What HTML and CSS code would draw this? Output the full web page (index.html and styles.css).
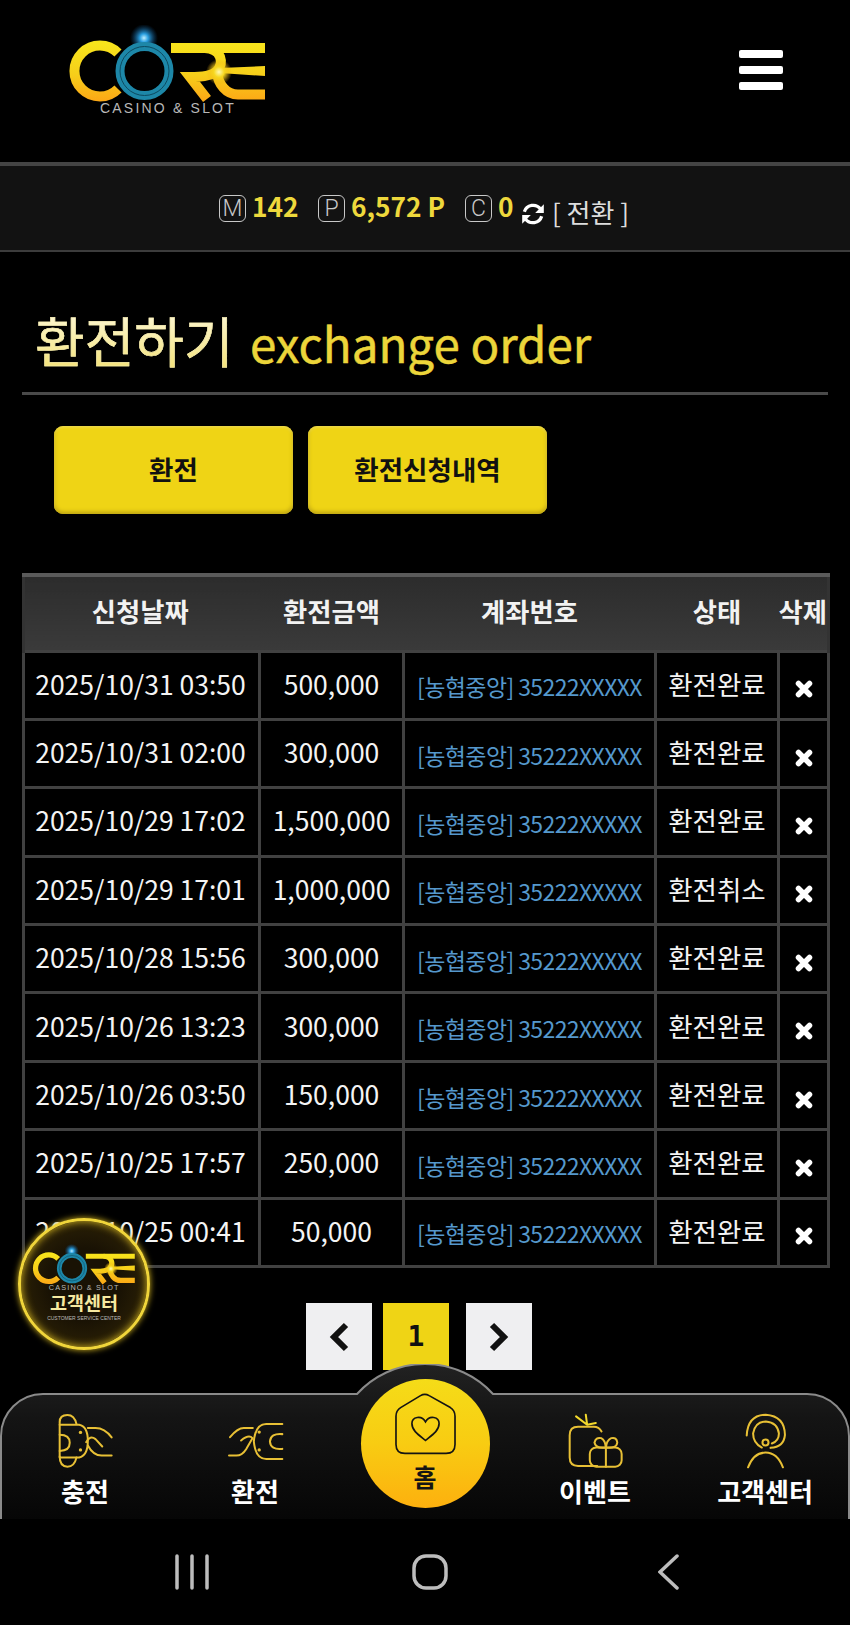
FILE: index.html
```html
<!DOCTYPE html>
<html lang="ko">
<head>
<meta charset="utf-8">
<title>환전하기</title>
<link rel="stylesheet" href="styles.css">
</head>
<body>
<svg class="defs" width="0" height="0" aria-hidden="true">
  <defs>
    <linearGradient id="gold" x1="0" y1="42" x2="0" y2="100" gradientUnits="userSpaceOnUse">
      <stop offset="0" stop-color="#f8e51c"/><stop offset=".55" stop-color="#f6cf1a"/><stop offset="1" stop-color="#fca916"/>
    </linearGradient>
    <radialGradient id="blueflare"><stop offset="0" stop-color="#bfeeff"/><stop offset=".3" stop-color="#2a9fe0"/><stop offset="1" stop-color="#0a4a80" stop-opacity="0"/></radialGradient>
    <radialGradient id="goldflare"><stop offset="0" stop-color="#fff8b0"/><stop offset=".4" stop-color="#f7d820"/><stop offset="1" stop-color="#f0b010" stop-opacity="0"/></radialGradient>
    <symbol id="core-logo" viewBox="60 25 215 95">
      <circle cx="144" cy="38" r="14" fill="url(#blueflare)"/>
      <path class="lg" d="M118 53 A25.500 25.500 0 1 0 118 89"/>
      <circle cx="144.500" cy="71" r="24.500" class="ring"/>
      <circle cx="144.500" cy="71" r="24.500" class="ring-in"/>
      <path class="lg" d="M171 48 H265"/>
      <path class="lg" d="M205 48 C222 49 224 63 217 71 C212 76 200 77 190 77 L207 99"/>
      <path class="lg" d="M265 94.500 H238 C226 94.500 218 84 217 72"/>
      <path d="M220 68 L265 66 V76 L220 73 Z" fill="url(#gold)"/>
      <circle cx="219" cy="72" r="13" fill="url(#goldflare)"/>
      <text x="100" y="113" class="logo-sub">CASINO &amp; SLOT</text>
    </symbol>
  </defs>
</svg>
<div class="page">
  <header class="topbar">
    <svg class="logo" viewBox="0 0 215 95" role="img" aria-label="CORE"><use href="#core-logo" width="215" height="95"/></svg>
    <div class="burger"><span></span><span></span><span></span></div>
  </header>

  <div class="wallet">
    <span class="badge-key">M</span><b class="val val-m">142</b>
    <span class="badge-key">P</span><b class="val val-p">6,572 P</b>
    <span class="badge-key">C</span><b class="val val-c">0</b>
    <svg class="refresh" viewBox="0 0 24 24"><path d="M4 10 A8.500 8.500 0 0 1 19 7.500" /><path d="M20 14 A8.500 8.500 0 0 1 5 16.500"/><path class="fill" d="M22 3 V11 H14 Z"/><path class="fill" d="M2 21 V13 H10 Z"/></svg>
    <span class="convert">[ 전환 ]</span>
  </div>

  <main class="content">
    <h1 class="title"><span class="title-ko">환전하기</span> <span class="title-en">exchange order</span></h1>
    <div class="tabs">
      <a class="tab">환전</a>
      <a class="tab">환전신청내역</a>
    </div>
    <table class="orders">
      <colgroup><col class="c1"><col class="c2"><col class="c3"><col class="c4"><col class="c5"></colgroup>
      <thead><tr><th>신청날짜</th><th>환전금액</th><th>계좌번호</th><th>상태</th><th>삭제</th></tr></thead>
      <tbody>
        <tr><td>2025/10/31 03:50</td><td>500,000</td><td class="acct">[농협중앙] 35222XXXXX</td><td>환전완료</td><td class="del"><svg viewBox="0 0 18 18"><path d="M3.500 3.500 L14.500 14.500 M14.500 3.500 L3.500 14.500"/></svg></td></tr>
        <tr><td>2025/10/31 02:00</td><td>300,000</td><td class="acct">[농협중앙] 35222XXXXX</td><td>환전완료</td><td class="del"><svg viewBox="0 0 18 18"><path d="M3.500 3.500 L14.500 14.500 M14.500 3.500 L3.500 14.500"/></svg></td></tr>
        <tr><td>2025/10/29 17:02</td><td>1,500,000</td><td class="acct">[농협중앙] 35222XXXXX</td><td>환전완료</td><td class="del"><svg viewBox="0 0 18 18"><path d="M3.500 3.500 L14.500 14.500 M14.500 3.500 L3.500 14.500"/></svg></td></tr>
        <tr><td>2025/10/29 17:01</td><td>1,000,000</td><td class="acct">[농협중앙] 35222XXXXX</td><td>환전취소</td><td class="del"><svg viewBox="0 0 18 18"><path d="M3.500 3.500 L14.500 14.500 M14.500 3.500 L3.500 14.500"/></svg></td></tr>
        <tr><td>2025/10/28 15:56</td><td>300,000</td><td class="acct">[농협중앙] 35222XXXXX</td><td>환전완료</td><td class="del"><svg viewBox="0 0 18 18"><path d="M3.500 3.500 L14.500 14.500 M14.500 3.500 L3.500 14.500"/></svg></td></tr>
        <tr><td>2025/10/26 13:23</td><td>300,000</td><td class="acct">[농협중앙] 35222XXXXX</td><td>환전완료</td><td class="del"><svg viewBox="0 0 18 18"><path d="M3.500 3.500 L14.500 14.500 M14.500 3.500 L3.500 14.500"/></svg></td></tr>
        <tr><td>2025/10/26 03:50</td><td>150,000</td><td class="acct">[농협중앙] 35222XXXXX</td><td>환전완료</td><td class="del"><svg viewBox="0 0 18 18"><path d="M3.500 3.500 L14.500 14.500 M14.500 3.500 L3.500 14.500"/></svg></td></tr>
        <tr><td>2025/10/25 17:57</td><td>250,000</td><td class="acct">[농협중앙] 35222XXXXX</td><td>환전완료</td><td class="del"><svg viewBox="0 0 18 18"><path d="M3.500 3.500 L14.500 14.500 M14.500 3.500 L3.500 14.500"/></svg></td></tr>
        <tr><td>2025/10/25 00:41</td><td>50,000</td><td class="acct">[농협중앙] 35222XXXXX</td><td>환전완료</td><td class="del"><svg viewBox="0 0 18 18"><path d="M3.500 3.500 L14.500 14.500 M14.500 3.500 L3.500 14.500"/></svg></td></tr>
      </tbody>
    </table>
    <nav class="pager">
      <a class="pg"><svg viewBox="0 0 24 32"><path d="M19 4 L7 16 L19 28"/></svg></a>
      <a class="pg pg-on">1</a>
      <a class="pg"><svg viewBox="0 0 24 32"><path d="M5 4 L17 16 L5 28"/></svg></a>
    </nav>
  </main>

  <aside class="cs-float">
    <svg class="cs-logo" viewBox="0 0 215 95" aria-hidden="true"><use href="#core-logo" width="215" height="95"/></svg>
    <strong class="cs-ko">고객센터</strong>
    <span class="cs-en">CUSTOMER SERVICE CENTER</span>
  </aside>

  <div class="dock">
    <nav class="tabbar">
      <svg class="tabbar-bg" viewBox="0 0 850 155" preserveAspectRatio="none" aria-hidden="true">
        <defs><linearGradient id="barfill" x1="0" y1="0" x2="0" y2="1"><stop offset="0" stop-color="#222"/><stop offset=".35" stop-color="#141414"/><stop offset="1" stop-color="#060606"/></linearGradient></defs>
        <path fill="url(#barfill)" d="M1 155 V72 A42 42 0 0 1 43 30 H357 A92 92 0 0 1 493 30 H807 A42 42 0 0 1 849 72 V155 Z"/>
        <path fill="none" stroke="#8a8a8a" stroke-width="2" d="M1 155 V72 A42 42 0 0 1 43 30 H357 A92 92 0 0 1 493 30 H807 A42 42 0 0 1 849 72 V155"/>
      </svg>
      <a class="item">
        <svg class="ico" viewBox="170 125 170 170"><path d="M178 255 V152 Q178 131 201 131 Q222 131 228 158"/><path d="M178 255 Q178 285 201 285 Q222 285 228 258"/><path d="M178 160 H236 Q262 165 262 208 Q262 252 236 258 H178"/><path d="M178 190 Q208 190 208 214 Q208 238 178 238"/><circle class="dot" cx="240" cy="183" r="5"/><circle class="dot" cx="240" cy="235" r="5"/><path d="M262 170 H285 Q312 170 333 198"/><path d="M257 212 Q268 190 285 203 L305 225"/><path d="M262 222 Q278 252 303 252 H333"/></svg>
        <span class="lbl">충전</span>
      </a>
      <a class="item">
        <svg class="ico" viewBox="680 125 170 170"><path d="M689 197 Q712 170 730 170 H757"/><path d="M722 207 Q745 188 756 200 L737 233 Q725 252 708 252 H686"/><path d="M845 158 H797 Q765 158 760 210 Q765 262 797 262 H845"/><circle class="dot" cx="776" cy="182" r="5"/><circle class="dot" cx="776" cy="235" r="5"/><path d="M845 188 Q810 185 808 210 Q810 236 845 232"/></svg>
        <span class="lbl">환전</span>
      </a>
      <a class="item item-home">
        <span class="home-disc">
          <svg class="home-ico" viewBox="340 330 190 190"><path d="M346 403 Q346 386 360 377 L420 341 Q433 333 446 341 L510 377 Q524 386 524 403 V488 Q524 515 497 515 H373 Q346 515 346 488 Z"/><path d="M435 476 C415 460 394 447 394 425 C394 405 423 398 435 420 C447 398 476 405 476 425 C476 447 455 460 435 476 Z"/></svg>
          <span class="home-lbl">홈</span>
        </span>
      </a>
      <a class="item">
        <svg class="ico" viewBox="110 125 170 170"><path d="M213 180 Q205 166 190 166 H143 Q118 166 118 191 V258 Q118 283 143 283 H200"/><path class="ray" d="M170 160 L137 135 M170 160 L166 130 M170 160 L196 155"/><rect x="178" y="228" width="95" height="57" rx="19"/><path d="M226 228 V285"/><path d="M226 228 Q195 232 192 213 Q196 196 212 200 Q224 206 226 228 Q228 206 242 200 Q258 196 260 213 Q258 232 226 228 Z"/></svg>
        <span class="lbl">이벤트</span>
      </a>
      <a class="item">
        <svg class="ico" viewBox="620 125 170 170"><path d="M649 192 Q652 131 706 130 Q762 134 763 190 Q760 226 720 229"/><path d="M694 228 Q668 214 668 186 Q674 151 706 150 Q741 153 745 186 Q745 208 724 216"/><circle cx="705" cy="213" r="9"/><path d="M653 287 Q670 243 705 243 Q740 243 757 287"/></svg>
        <span class="lbl">고객센터</span>
      </a>
    </nav>
    <div class="sysbar">
      <svg class="sys sys-recent" viewBox="0 0 34 36"><path d="M2 2 V34 M17 2 V34 M32 2 V34"/></svg>
      <svg class="sys sys-home" viewBox="0 0 36 36"><rect x="2" y="2" width="32" height="32" rx="12"/></svg>
      <svg class="sys sys-back" viewBox="0 0 21 36"><path d="M19 2 L2 18 L19 34"/></svg>
    </div>
  </div>
</div>
</body>
</html>
```
FILE: styles.css
```css
* { box-sizing: border-box; }
html, body { margin: 0; padding: 0; background: #000; }
body { font-family: "Noto Sans CJK KR", "Noto Sans", sans-serif; color: #fff; font-feature-settings: "locl" 0; }
.defs { position: absolute; }
.page { position: relative; width: 850px; height: 1625px; overflow: hidden; background: #000; }

/* logo parts */
.lg { fill: none; stroke: url(#gold); stroke-width: 10; }
.ring { fill: none; stroke: #1d87a8; stroke-width: 9; }
.ring-in { fill: none; stroke: #0c4a60; stroke-width: 1; }
.logo-sub { font-family: "Liberation Sans", sans-serif; font-size: 14px; letter-spacing: 2.200px; fill: #b8b8b8; }

/* header */
.topbar { height: 162px; display: flex; align-items: flex-start; justify-content: space-between; padding: 25px 67px 0 60px; }
.logo { width: 215px; height: 95px; display: block; }
.burger { display: flex; flex-direction: column; gap: 8px; width: 44px; margin-top: 25px; }
.burger span { height: 8px; border-radius: 2px; background: #fff; }

/* wallet */
.wallet { height: 90px; display: flex; align-items: center; padding: 0 0 0 219px; background: #121212; border-top: 4px solid #444; border-bottom: 2px solid #3c3c3c; }
.badge-key { width: 27px; height: 27px; display: flex; align-items: center; justify-content: center; border: 1.500px solid #c8c8c8; border-radius: 6px; font-family: Roboto, sans-serif; font-size: 23px; font-weight: 300; color: #c8c8c8; line-height: 1; }
.val { font-size: 26.300px; font-weight: 700; color: #eed83c; margin: -4px 0 0 6px; line-height: 1; }
.val-m { width: 66px; }
.val-p { width: 114px; }
.val-c { width: 22px; }
.refresh { width: 26px; height: 26px; margin: 12px 6px 0 0; }
.refresh path { fill: none; stroke: #fff; stroke-width: 3; }
.refresh path.fill { fill: #fff; stroke: none; }
.convert { font-size: 26px; color: #ddd; line-height: 1; margin-top: 7px; white-space: nowrap; }

/* content */
.content { padding: 0 22px; }
.title { margin: 0; height: 143px; padding: 53px 0 0 13px; border-bottom: 3px solid #4a4a4a; font-weight: 400; line-height: 70px; white-space: nowrap; }
.title-ko { font-size: 54px; background: linear-gradient(#fffbe8, #f2df6a); -webkit-background-clip: text; background-clip: text; color: transparent; -webkit-text-stroke: 0.500px #f8eeb0; }
.title-en { font-size: 47.500px; color: #ecd53a; margin-left: 9px; -webkit-text-stroke: 0.500px #ecd53a; }
.tabs { display: flex; gap: 15px; padding-left: 32px; margin-top: 31px; }
.tab { width: 239px; height: 88px; padding-bottom: 4px; display: flex; align-items: center; justify-content: center; border-radius: 9px; background: #efd415; box-shadow: inset 0 -2px 4px #b99f10, inset 0 1px 3px #f8e86a; color: #111; font-size: 26.500px; font-weight: 700; }

/* table */
.orders { width: 805px; margin-top: 59px; table-layout: fixed; border-collapse: collapse; border-top: 4px solid #5a5a5a; }
.c1 { width: 236px; } .c2 { width: 144px; } .c3 { width: 252px; } .c4 { width: 123px; } .c5 { width: 50px; }
.orders th { height: 76px; padding: 0 0 6px; background: linear-gradient(#2c2c2c, #3a3a3a); color: #f2f2f2; font-size: 26.300px; font-weight: 700; white-space: nowrap; }
.orders th:first-child { border-left: 3px solid #333; padding-right: 4px; }
.orders th:last-child { border-right: 3px solid #333; }
.orders td { height: 68.400px; padding: 0 0 4px; border: 3px solid #414141; text-align: center; font-size: 26.500px; color: #f4f4f4; white-space: nowrap; }
.orders td:first-child { padding-right: 2px; }
.orders .acct { font-size: 23px; color: #5598cc; letter-spacing: -0.600px; padding: 2px 0 0; }
.orders .del { padding: 8px 0 0; }
.del svg { display: block; width: 18px; height: 18px; margin: 0 auto; }
.del path { fill: none; stroke: #fff; stroke-width: 5.500; stroke-linecap: round; }

/* pager */
.pager { display: flex; gap: 11px; margin-top: 35px; padding-left: 284px; }
.pg { width: 66px; height: 67px; display: flex; align-items: center; justify-content: center; background: #efeff1; }
.pg svg { width: 24px; height: 32px; }
.pg path { fill: none; stroke: #111; stroke-width: 6; }
.pg-on { margin-right: 6px; background: #efd415; color: #111; font-size: 28px; font-weight: 700; font-family: "DejaVu Sans Mono", monospace; }

/* floating service badge */
.cs-float { position: absolute; left: 18px; top: 1218px; width: 132px; height: 132px; border-radius: 50%; display: flex; flex-direction: column; align-items: center; background: radial-gradient(circle, #191204 40%, #2a2006 72%, #5c480c 92%, #a58a18 100%); border: 3px solid #f0d53a; box-shadow: 0 0 6px #d8b820, inset 0 0 8px #d8b820; }
.cs-logo { width: 112px; height: 50px; margin-top: 23px; flex: none; }
.cs-ko { margin-top: -3px; font-size: 18.500px; line-height: 22px; color: #f6e9a0; white-space: nowrap; }
.cs-en { font-family: "Liberation Sans", sans-serif; font-size: 5px; line-height: 8px; margin-top: 1px; color: #bbb; white-space: nowrap; }

/* bottom dock */
.dock { position: absolute; left: 0; right: 0; bottom: 0; }
.tabbar { position: relative; height: 155px; display: grid; grid-template-columns: repeat(5, 170px); }
.tabbar-bg { position: absolute; left: 0; top: 0; width: 850px; height: 155px; display: block; }
.item { position: relative; display: flex; flex-direction: column; align-items: center; padding-top: 49px; }
.ico { width: 57px; height: 57px; display: block; }
.ico path, .ico rect, .ico circle { fill: none; stroke: #e8c035; stroke-width: 6; stroke-linecap: round; }
.ico .dot { fill: #e8c035; stroke: none; }
.ico .ray { stroke: #f3d92c; }
.lbl { margin-top: 3px; font-size: 26px; font-weight: 700; line-height: 36px; color: #fff; white-space: nowrap; }
.item-home { padding-top: 15px; }
.home-disc { width: 129px; height: 129px; border-radius: 50%; display: flex; flex-direction: column; align-items: center; padding-top: 13px; background: linear-gradient(#f5dc18, #f8cc12 50%, #fdb00e); }
.home-ico { width: 63px; height: 63px; display: block; flex: none; }
.home-ico path { fill: none; stroke: #141414; stroke-width: 5; }
.home-lbl { font-size: 25px; font-weight: 700; line-height: 30px; margin-top: 6px; color: #141414; }

/* system bar */
.sysbar { height: 106px; position: relative; background: #000; }
.sys { position: absolute; top: 35px; height: 36px; }
.sys path, .sys rect { fill: none; stroke: #bdbdbd; stroke-width: 3.500; stroke-linecap: round; }
.sys-recent { left: 175px; width: 34px; }
.sys-home { left: 412px; width: 36px; }
.sys-back { left: 658px; width: 21px; }
```
